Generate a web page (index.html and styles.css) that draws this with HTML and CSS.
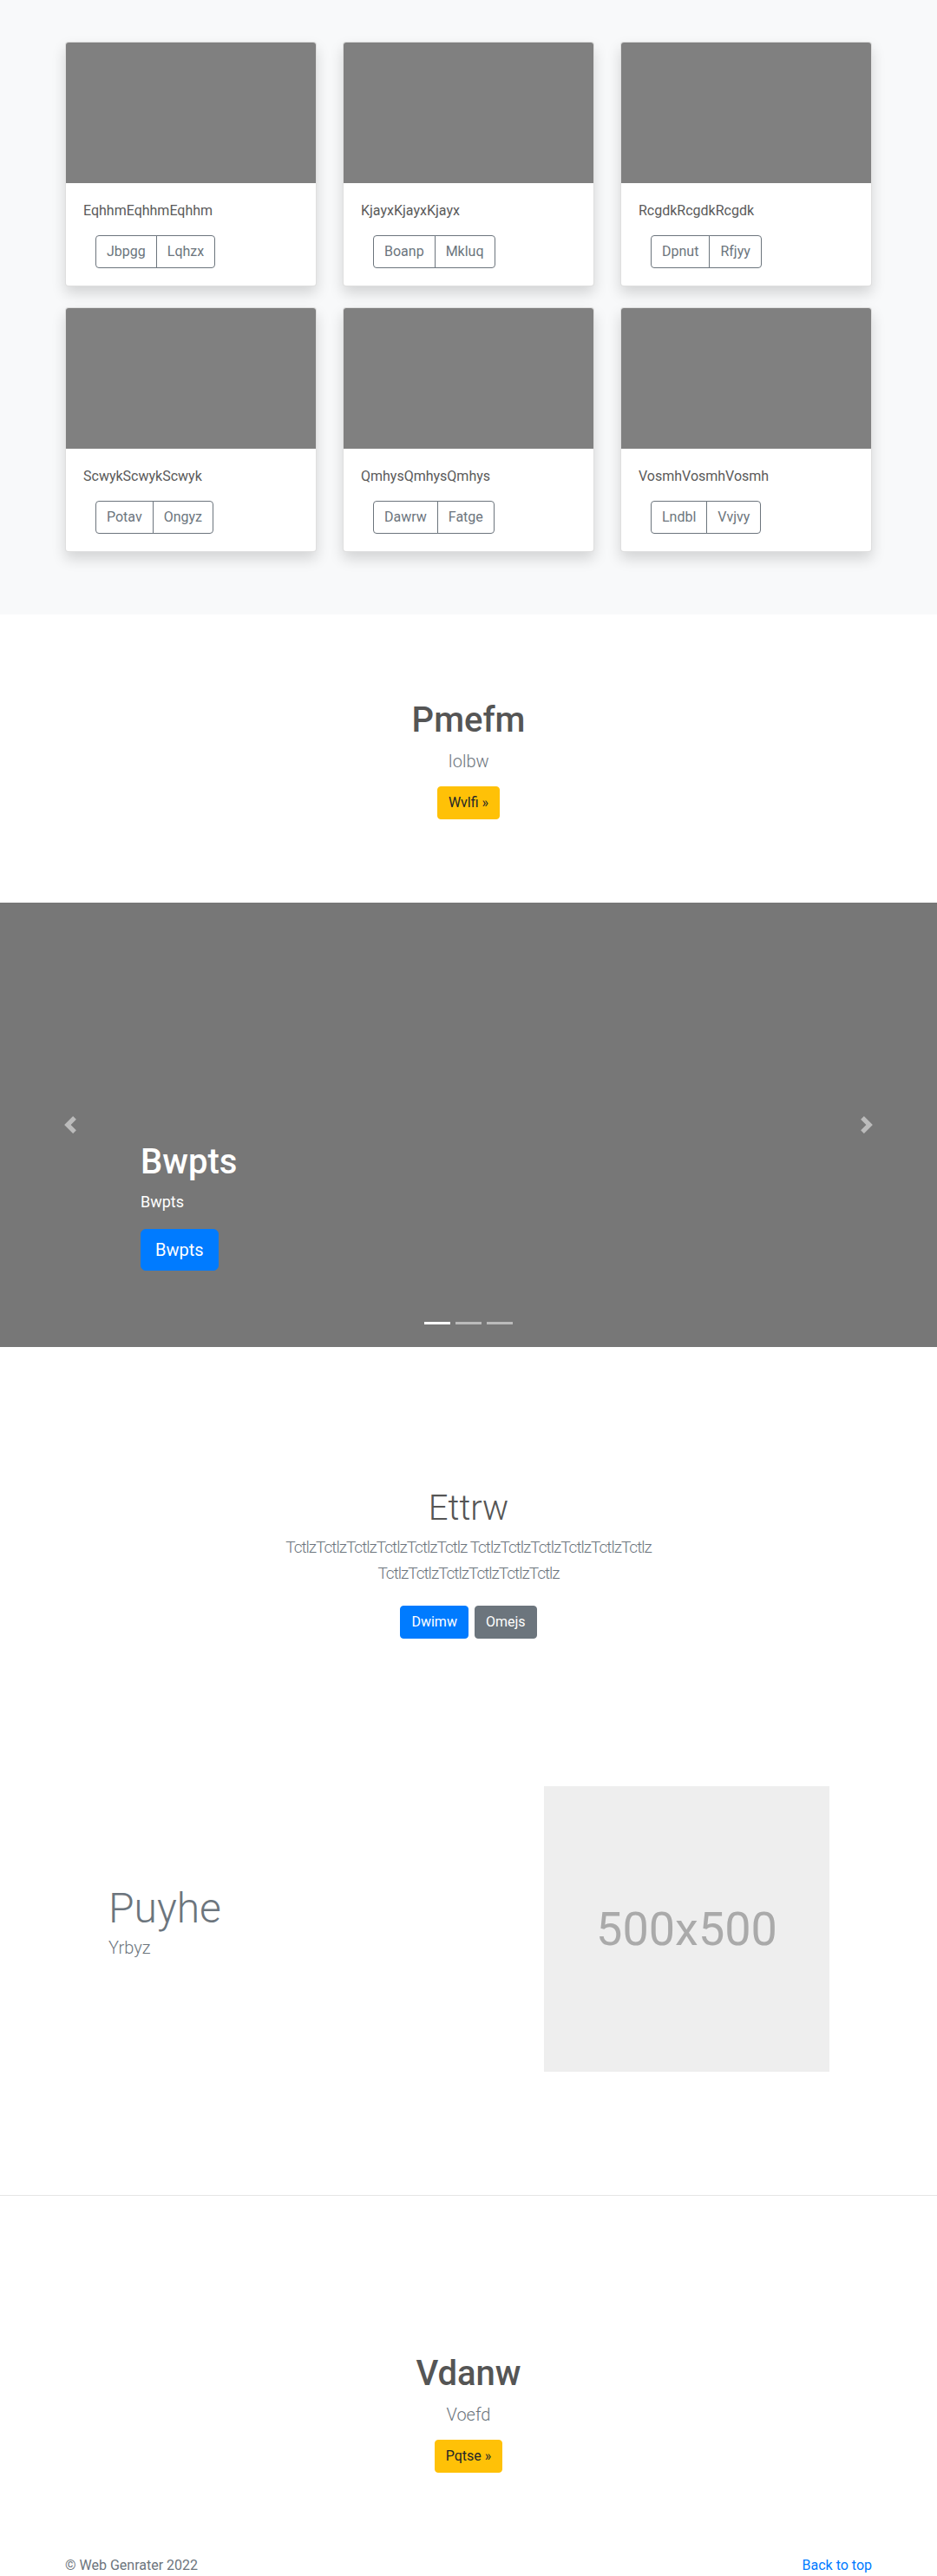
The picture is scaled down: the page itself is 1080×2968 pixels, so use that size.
FILE: index.html
```html
<!DOCTYPE html>
<html lang="en">
<head>
<meta charset="utf-8">
<title>Album</title>
<link rel="stylesheet" href="styles.css">
</head>
<body>
<main>
  <section class="album">
    <div class="container">
      <div class="card-grid">
        <div class="card">
          <div class="card-img"></div>
          <div class="card-body">
            <p class="card-text">EqhhmEqhhmEqhhm</p>
            <div class="btn-group"><a class="btn btn-outline" href="#">Jbpgg</a><a class="btn btn-outline" href="#">Lqhzx</a></div>
          </div>
        </div>
        <div class="card">
          <div class="card-img"></div>
          <div class="card-body">
            <p class="card-text">KjayxKjayxKjayx</p>
            <div class="btn-group"><a class="btn btn-outline" href="#">Boanp</a><a class="btn btn-outline" href="#">Mkluq</a></div>
          </div>
        </div>
        <div class="card">
          <div class="card-img"></div>
          <div class="card-body">
            <p class="card-text">RcgdkRcgdkRcgdk</p>
            <div class="btn-group"><a class="btn btn-outline" href="#">Dpnut</a><a class="btn btn-outline" href="#">Rfjyy</a></div>
          </div>
        </div>
        <div class="card">
          <div class="card-img"></div>
          <div class="card-body">
            <p class="card-text">ScwykScwykScwyk</p>
            <div class="btn-group"><a class="btn btn-outline" href="#">Potav</a><a class="btn btn-outline" href="#">Ongyz</a></div>
          </div>
        </div>
        <div class="card">
          <div class="card-img"></div>
          <div class="card-body">
            <p class="card-text">QmhysQmhysQmhys</p>
            <div class="btn-group"><a class="btn btn-outline" href="#">Dawrw</a><a class="btn btn-outline" href="#">Fatge</a></div>
          </div>
        </div>
        <div class="card">
          <div class="card-img"></div>
          <div class="card-body">
            <p class="card-text">VosmhVosmhVosmh</p>
            <div class="btn-group"><a class="btn btn-outline" href="#">Lndbl</a><a class="btn btn-outline" href="#">Vvjvy</a></div>
          </div>
        </div>
      </div>
    </div>
  </section>

  <section class="hero hero-top">
    <div class="container">
      <h1 class="hero-title">Pmefm</h1>
      <p class="lead">Iolbw</p>
      <a class="btn btn-warning" href="#">Wvlfi »</a>
    </div>
  </section>

  <section class="carousel">
    <div class="carousel-caption">
      <h1 class="caption-title">Bwpts</h1>
      <p class="caption-text">Bwpts</p>
      <div class="caption-action"><a class="btn btn-lg btn-primary" href="#">Bwpts</a></div>
    </div>
    <a class="carousel-control control-prev" href="#">
      <svg width="20" height="20" viewBox="0 0 8 8" fill="#fff"><path d="M5.25 0l-4 4 4 4 1.5-1.5L4.25 4l2.5-2.5L5.25 0z"/></svg>
    </a>
    <a class="carousel-control control-next" href="#">
      <svg width="20" height="20" viewBox="0 0 8 8" fill="#fff"><path d="M2.75 0l-1.5 1.5L3.75 4l-2.5 2.5L2.75 8l4-4-4-4z"/></svg>
    </a>
    <ol class="indicators">
      <li class="active"></li>
      <li></li>
      <li></li>
    </ol>
  </section>

  <section class="feature">
    <div class="feature-inner">
      <h1 class="feature-title">Ettrw</h1>
      <p class="feature-lead">TctlzTctlzTctlzTctlzTctlzTctlz TctlzTctlzTctlzTctlzTctlzTctlz TctlzTctlzTctlzTctlzTctlzTctlz</p>
      <div class="feature-actions">
        <a class="btn btn-primary" href="#">Dwimw</a>
        <a class="btn btn-secondary" href="#">Omejs</a>
      </div>
    </div>
  </section>

  <section class="split">
    <div class="container">
      <div class="split-row">
        <div class="split-text">
          <h2 class="display">Puyhe</h2>
          <p class="lead split-lead">Yrbyz</p>
        </div>
        <div class="placeholder">500x500</div>
      </div>
    </div>
  </section>

  <hr class="divider">

  <section class="hero hero-bottom">
    <div class="container">
      <h1 class="hero-title">Vdanw</h1>
      <p class="lead">Voefd</p>
      <a class="btn btn-warning" href="#">Pqtse »</a>
    </div>
  </section>
</main>

<footer class="footer">
  <div class="container footer-row">
    <p class="footer-copy">© Web Genrater 2022</p>
    <p class="footer-top"><a href="#">Back to top</a></p>
  </div>
</footer>
</body>
</html>
```

FILE: styles.css
```css
* {
  box-sizing: border-box;
}

body {
  margin: 0;
  font-family: Roboto, "Noto Sans", "Liberation Sans", sans-serif;
  font-size: 16px;
  line-height: 1.5;
  color: #555;
  background: #fff;
}

a {
  text-decoration: none;
}

.container {
  width: 960px;
  margin: 0 auto;
  padding: 0 15px;
}

/* ---------- album ---------- */
.album {
  background: #f8f9fa;
  padding: 48px 0 72px;
}

.card-grid {
  display: grid;
  grid-template-columns: repeat(3, 1fr);
  column-gap: 30px;
  row-gap: 24px;
}

.card {
  background: #fff;
  border: 1px solid rgba(0, 0, 0, 0.125);
  border-radius: 4px;
  box-shadow: 0 8px 16px rgba(0, 0, 0, 0.15);
  overflow: hidden;
}

.card-img {
  height: 162px;
  background: #808080;
}

.card-body {
  padding: 20px;
}

.card-text {
  margin: 0 0 16px;
  color: #5a5a5a;
}

.btn-group {
  display: inline-flex;
  margin-left: 14px;
}

/* ---------- buttons ---------- */
.btn {
  display: inline-block;
  font-family: inherit;
  font-size: 16px;
  line-height: 24px;
  padding: 6px 12px;
  border: 1px solid transparent;
  border-radius: 4px;
  text-align: center;
  white-space: nowrap;
}

.btn-outline {
  color: #6c757d;
  border-color: #6c757d;
  background: transparent;
}

.btn-group .btn {
  border-radius: 0;
}

.btn-group .btn:first-child {
  border-radius: 4px 0 0 4px;
}

.btn-group .btn:last-child {
  border-radius: 0 4px 4px 0;
  margin-left: -1px;
}

.btn-warning {
  background: #ffc107;
  border-color: #ffc107;
  color: #212529;
}

.btn-primary {
  background: #007bff;
  border-color: #007bff;
  color: #fff;
}

.btn-secondary {
  background: #6c757d;
  border-color: #6c757d;
  color: #fff;
}

.btn-lg {
  font-size: 20px;
  line-height: 30px;
  padding: 8px 16px;
  border-radius: 6px;
}

/* ---------- hero ---------- */
.hero {
  text-align: center;
}

.hero-top {
  padding: 98px 0 96px;
}

.hero-bottom {
  padding: 181px 0 47px;
}

.hero-title {
  font-size: 40px;
  font-weight: 500;
  line-height: 1.2;
  margin: 0 0 8px;
  color: #555;
}

.lead {
  font-size: 20px;
  font-weight: 300;
  line-height: 30px;
  color: #6c757d;
  margin: 0 0 14px;
}

/* ---------- carousel ---------- */
.carousel {
  position: relative;
  height: 512px;
  background: #777;
  overflow: hidden;
}

.carousel-caption {
  position: absolute;
  left: 15%;
  right: 15%;
  bottom: 48px;
  padding: 20px 0;
  color: #fff;
  z-index: 2;
}

.caption-title {
  font-size: 40px;
  font-weight: 500;
  line-height: 1.2;
  margin: 0 0 8px;
}

.caption-text {
  font-size: 18px;
  line-height: 27px;
  margin: 0 0 18px;
}

.caption-action {
  margin-bottom: 20px;
}

.carousel-control {
  position: absolute;
  top: 0;
  bottom: 0;
  width: 15%;
  display: flex;
  align-items: center;
  justify-content: center;
  opacity: 0.5;
  z-index: 1;
}

.control-prev {
  left: 0;
}

.control-next {
  right: 0;
}

.indicators {
  position: absolute;
  left: 0;
  right: 0;
  bottom: 0;
  margin: 0 0 16px;
  padding: 0;
  list-style: none;
  display: flex;
  justify-content: center;
  z-index: 3;
}

.indicators li {
  box-sizing: content-box;
  width: 30px;
  height: 3px;
  margin: 0 3px;
  background: #fff;
  background-clip: padding-box;
  border-top: 10px solid transparent;
  border-bottom: 10px solid transparent;
  opacity: 0.5;
}

.indicators li.active {
  opacity: 1;
}

/* ---------- feature ---------- */
.feature {
  padding-top: 162px;
  text-align: center;
}

.feature-inner {
  width: 460px;
  margin: 0 auto;
}

.feature-title {
  font-size: 40px;
  font-weight: 300;
  line-height: 1.2;
  margin: 0 0 6px;
  color: #555;
}

.feature-lead {
  font-size: 19px;
  font-weight: 300;
  line-height: 30px;
  letter-spacing: -1px;
  color: #6c757d;
  margin: 0 0 22px;
}

.feature-actions {
  display: flex;
  justify-content: center;
  gap: 7px;
}

/* ---------- split ---------- */
.split {
  padding: 170px 0 142px;
}

.split-row {
  display: flex;
  align-items: center;
  justify-content: space-between;
  padding: 0 49px 0 50px;
}

.display {
  font-size: 48px;
  font-weight: 300;
  line-height: 1.2;
  margin: 0 0 2px;
  color: #6c757d;
}

.split-lead {
  margin: 0 0 16px;
}

.placeholder {
  width: 329px;
  height: 329px;
  background: #eee;
  color: #aaa;
  font-size: 54px;
  display: flex;
  align-items: center;
  justify-content: center;
}

.divider {
  margin: 0;
  border: 0;
  border-top: 1px solid rgba(0, 0, 0, 0.1);
}

/* ---------- footer ---------- */
.footer {
  padding-top: 48px;
  color: #6c757d;
}

.footer-row {
  display: flex;
  justify-content: space-between;
}

.footer p {
  margin: 0;
}

.footer-top a {
  color: #007bff;
}
```
